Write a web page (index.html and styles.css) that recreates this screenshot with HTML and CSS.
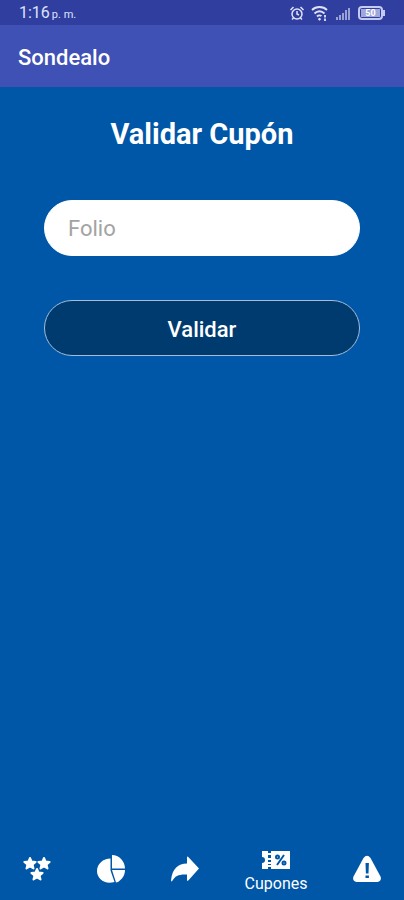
FILE: index.html
```html
<!DOCTYPE html>
<html lang="es">
<head>
  <meta charset="UTF-8" />
  <meta name="viewport" content="width=device-width, initial-scale=1" />
  <title>Sondealo</title>
  <link rel="stylesheet" href="styles.css">
</head>
<body>
  <div class="status-bar">
    <span class="time">1:16 <small>p. m.</small></span>
    <div class="status-icons">
      <svg width="16" height="16" viewBox="0 0 16 16" fill="none" stroke="currentColor" stroke-width="1.5">
        <circle cx="8" cy="9" r="5" />
        <path d="M8 6v3l2 1M1.5 5l3-3M14.5 5l-3-3M4.5 13L3 14.5M11.5 13l1.5 1.5" />
      </svg>
      <svg width="18" height="16" viewBox="0 0 18 16" fill="none" stroke="currentColor" stroke-width="1.8">
        <path d="M1 5c4-4 11-4 15 0M3.5 8.5c3-3 7-3 10 0M6 11.500c1.500-1.500 3-1.500 4.500-.5" />
        <path d="M7.500 13.500l1 1 1-1M14 10v2.500M14 13.500V16" />
      </svg>
      <svg class="signal" width="16" height="16" viewBox="0 0 16 16" fill="currentColor">
        <path d="M1 12h2v3H1zM4 10h2v5H4zM7 8h2v7H7zM10 5h2v10h-2zM13 3h2v12h-2z" />
      </svg>
      <div class="battery"><span>50</span></div>
    </div>
  </div>

  <header class="app-bar">Sondealo</header>

  <main>
    <h1>Validar Cupón</h1>
    <form class="coupon-form">
      <input type="text" id="folio" name="folio" placeholder="Folio" aria-label="Folio">
      <button type="button">Validar</button>
    </form>
  </main>

  <nav class="bottom-nav">
    <a href="#favoritos" aria-label="Favoritos">
      <svg width="28" height="28" viewBox="0 0 28 28" fill="currentColor" stroke="currentColor" stroke-width="2" stroke-linejoin="round">
        <path id="star" d="M7 3l1.600 3.600 4 .4-3 2.600.9 3.900L7 11.500l-3.500 2 .9-3.900-3-2.600 4-.4z" />
        <use href="#star" x="14" />
        <use href="#star" x="7" y="11" />
      </svg>
    </a>
    <a href="#estadisticas" aria-label="Estadísticas">
      <svg width="28" height="28" viewBox="0 0 28 28" fill="currentColor">
        <path d="M13.500 3.500v12L17.500 27C8 30 0 24 0 16 0 9 6 3.500 13.500 3.500z" />
        <path d="M15 0c7 0 13 6 13 13.500H15zM15 15h13c0 5-2.500 9-7 12l-2 .5z" />
      </svg>
    </a>
    <a href="#compartir" aria-label="Compartir">
      <svg width="28" height="28" viewBox="0 0 28 28" fill="currentColor">
        <path d="M16 2.500q0-1.500 1.300-.5L28 13.500 17.300 25.500q-1.300.8-1.300-.3v-5.700C8 19 4 21 1.500 25.500.5 27.500-.2 26.500.2 24 1.500 14 7 8.500 16 8.500z" />
      </svg>
    </a>
    <a href="#cupones" class="active">
      <svg width="28" height="20" viewBox="0 0 28 20" fill="currentColor">
        <path fill-rule="evenodd" d="M0 1h6v2h3V1h19v18H9v-2H6v2H0v-6a3 3 0 0 0 0-6zM6 5v3h3V5zM6 10v2h3v-2zM6 14v1h3v-1z" />
        <g class="percent">
          <path d="M15 15l7-10" />
          <circle cx="15.500" cy="7" r="1.500" />
          <circle cx="22" cy="13" r="1.500" />
        </g>
      </svg>
      <span>Cupones</span>
    </a>
    <a href="#avisos" aria-label="Avisos">
      <svg width="28" height="28" viewBox="0 0 28 28" fill="currentColor">
        <path d="M10.500 3q3.500-4.500 7 0l10 18.500q1.500 4.500-3 5.500h-21Q-1 26 .5 21.500z" />
        <path class="mark" d="M12.500 8h3.400l-.4 10.500h-2.600zM12.500 20.500h3.400v2.500h-3.400z" />
      </svg>
    </a>
  </nav>
</body>
</html>
```

FILE: styles.css
```css
* {
  box-sizing: border-box;
}

body {
  margin: 0;
  min-height: 100vh;
  display: flex;
  flex-direction: column;
  background-color: #0056a7;
  color: #fff;
  font-family: Roboto, sans-serif;
}

.status-bar {
  display: flex;
  align-items: center;
  justify-content: space-between;
  height: 25px;
  padding: 0 18px 0 19px;
  background-color: #303f9f;
  color: #dfe2fa;
}

.time {
  font-size: 16px;
}

.time small {
  font-size: 11px;
  margin-left: -2px;
}

.status-icons {
  display: flex;
  align-items: center;
  gap: 6px;
}

.signal {
  opacity: 0.6;
}

.battery {
  position: relative;
  width: 25px;
  height: 14px;
  margin: 0 3px 0 1px;
  padding: 1px;
  border: 2px solid #c5caf0;
  border-radius: 4px;
}

.battery::after {
  content: "";
  position: absolute;
  top: 2px;
  right: -4px;
  width: 2px;
  height: 6px;
  background-color: #c5caf0;
}

.battery span {
  display: block;
  background-color: #9fa8da;
  color: #fff;
  font-size: 9px;
  font-weight: bold;
  line-height: 8px;
  text-align: center;
}

.app-bar {
  display: flex;
  align-items: center;
  height: 62px;
  padding: 2px 18px 0;
  background-color: #3f51b5;
  font-size: 22px;
  font-weight: 500;
}

main {
  flex: 1;
  padding: 27px 44px;
}

h1 {
  margin: 0 0 46px;
  font-size: 29px;
  line-height: 40px;
  text-align: center;
}

.coupon-form {
  display: flex;
  flex-direction: column;
  gap: 44px;
}

.coupon-form input,
.coupon-form button {
  width: 100%;
  height: 56px;
  border-radius: 28px;
  font-family: inherit;
  font-size: 22px;
}

.coupon-form input {
  padding: 0 23px;
  border: 1px solid #fff;
  background-color: #fff;
  color: #333;
}

.coupon-form input::placeholder {
  color: #a3a3a3;
}

.coupon-form button {
  padding: 2px 0 0;
  border: 1px solid #a5bdd8;
  background-color: #003b70;
  color: #fff;
  font-weight: 500;
  cursor: pointer;
}

.bottom-nav {
  display: flex;
  height: 62px;
}

.bottom-nav a {
  flex: 1;
  display: flex;
  flex-direction: column;
  align-items: center;
  justify-content: center;
  color: #fff;
  text-decoration: none;
}

.bottom-nav .active {
  flex: 0 0 108px;
  gap: 4px;
  padding-top: 6px;
  font-size: 16px;
  line-height: 20px;
}

.percent {
  fill: none;
  stroke: #0056a7;
  stroke-width: 2;
}

.mark {
  fill: #0056a7;
}
```
